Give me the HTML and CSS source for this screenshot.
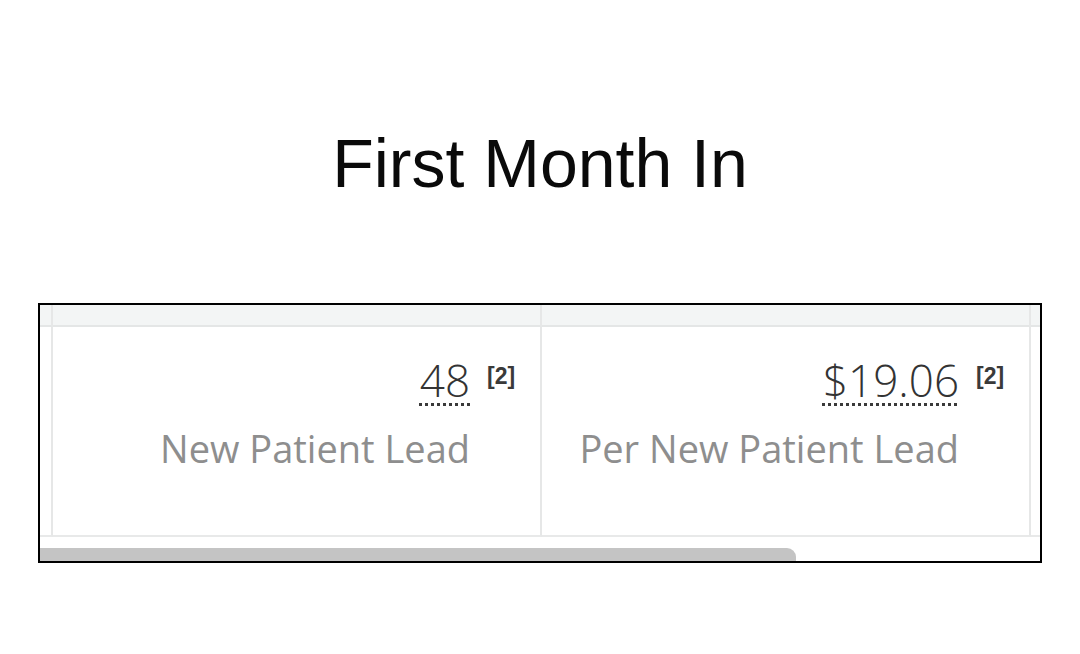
FILE: index.html
```html
<!DOCTYPE html>
<html lang="en">
<head>
<meta charset="utf-8">
<title>First Month In</title>
<link rel="stylesheet" href="styles.css">
</head>
<body>
  <h1 class="title">First Month In</h1>
  <div class="frame">
    <div class="grid">
      <div class="head edge"></div>
      <div class="head"></div>
      <div class="head"></div>
      <div class="head last"></div>

      <div class="cell edge"></div>
      <div class="cell">
        <div class="stat">
          <div class="value"><span class="num">48</span><span class="ref">[2]</span></div>
          <div class="label">New Patient Lead</div>
        </div>
      </div>
      <div class="cell">
        <div class="stat">
          <div class="value"><span class="num">$19.06</span><span class="ref">[2]</span></div>
          <div class="label">Per New Patient Lead</div>
        </div>
      </div>
      <div class="cell last"></div>
    </div>
    <div class="track"><div class="thumb"></div></div>
  </div>
</body>
</html>
```

FILE: styles.css
```css
html, body {
  margin: 0;
  padding: 0;
  background: #ffffff;
}

body {
  width: 1080px;
  height: 654px;
  overflow: hidden;
}

.title {
  margin: 129px 0 0;
  font-family: "Liberation Sans", Arial, sans-serif;
  font-weight: 400;
  font-size: 68px;
  line-height: 68px;
  text-align: center;
  color: #0a0a0a;
}

.frame {
  margin: 106px 0 0 38px;
  width: 1000px;
  border: 2px solid #000;
  background: #fff;
}

.grid {
  display: grid;
  grid-template-columns: 13px 489px 489px 1fr;
  grid-template-rows: 22px 210px;
}

.head {
  background: #f3f5f5;
  border-bottom: 2px solid #e4e6e6;
  border-right: 2px solid #e6e7e7;
}

.cell {
  border-bottom: 2px solid #e8e9e9;
  border-right: 2px solid #e6e7e7;
}

.last {
  border-right: none;
}

.stat {
  padding: 27px 70px 0 0;
  text-align: right;
  font-family: "Open Sans", "Noto Sans", sans-serif;
}

.value {
  position: relative;
  display: inline-block;
  font-size: 44px;
  line-height: 52px;
  font-weight: 300;
  color: #333333;
}

.num {
  text-decoration: underline dotted #3a3a3a;
  text-decoration-thickness: 3px;
  text-underline-offset: 6px;
}

.ref {
  position: absolute;
  left: 100%;
  top: 9px;
  margin-left: 17px;
  font-family: "Liberation Sans", Arial, sans-serif;
  font-weight: 700;
  font-size: 23px;
  line-height: 26px;
  color: #3a3a3a;
  white-space: nowrap;
}

.label {
  margin-top: 20px;
  font-size: 38px;
  line-height: 44px;
  font-weight: 400;
  color: #8e8e8e;
  white-space: nowrap;
}

.track {
  margin-top: 11px;
  height: 13px;
  background: #fff;
}

.thumb {
  width: 756px;
  height: 13px;
  background: #c4c4c4;
  border-top-right-radius: 9px;
}
```
